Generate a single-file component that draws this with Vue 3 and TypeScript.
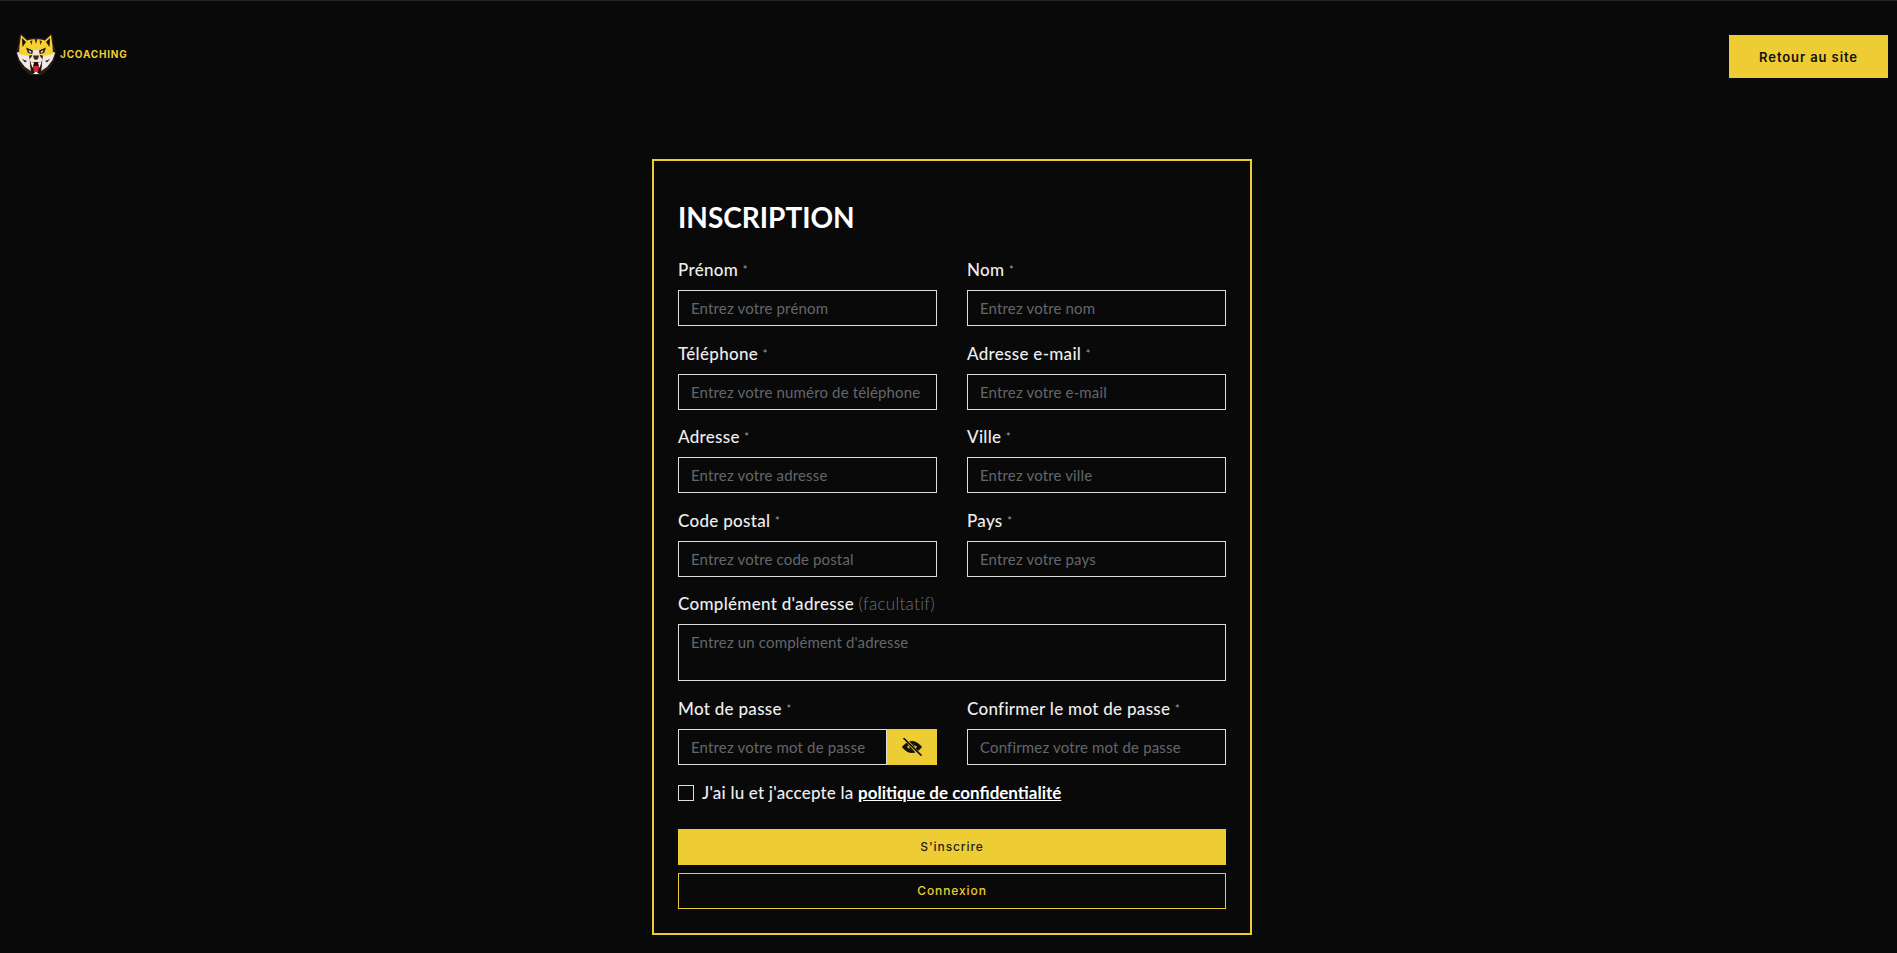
<script setup lang="ts">
const rows = [
  [
    { label: 'Prénom', placeholder: 'Entrez votre prénom' },
    { label: 'Nom', placeholder: 'Entrez votre nom' },
  ],
  [
    { label: 'Téléphone', placeholder: 'Entrez votre numéro de téléphone' },
    { label: 'Adresse e-mail', placeholder: 'Entrez votre e-mail' },
  ],
  [
    { label: 'Adresse', placeholder: 'Entrez votre adresse' },
    { label: 'Ville', placeholder: 'Entrez votre ville' },
  ],
  [
    { label: 'Code postal', placeholder: 'Entrez votre code postal' },
    { label: 'Pays', placeholder: 'Entrez votre pays' },
  ],
]
</script>

<template>
  <div class="page">
    <header class="topbar">
      <a class="brand" href="#">
        <svg class="tiger" viewBox="0 0 40 42" width="40" height="42">
          <!-- outline -->
          <path d="M4 0 L11 6 Q20 3 29 6 L36 0 L38 12 L40 20 L38 28 L33 36 L26 42 L14 42 L7 36 L2 28 L0 20 L2 12 Z" fill="#2c1c18" />
          <!-- cheeks -->
          <path d="M2 19 L13 22 L15 38 L9 34 L3.5 27 L1 20 Z M38 19 L27 22 L25 38 L31 34 L36.5 27 L39 20 Z" fill="#efeae6" />
          <path d="M6 26 L11 28 L9 29.5 Z M34 26 L29 28 L31 29.5 Z" fill="#3a2a22" />
          <!-- head -->
          <path d="M5 2 L11 7.5 Q20 4.5 29 7.5 L35 2 L36.5 13 L37 21 L28 23 L20 21 L12 23 L3 21 L3.5 13 Z" fill="#f6d130" />
          <!-- ears -->
          <path d="M6 5 L10 9 L6.5 14 Z M34 5 L30 9 L33.5 14 Z" fill="#14100e" />
          <!-- forehead stripes -->
          <path d="M18.5 6 L20 11 L21.5 6 Z M14 8 L15.5 12 L16.5 7.5 Z M26 8 L24.5 12 L23.5 7.5 Z" fill="#3a2a22" />
          <!-- eyes -->
          <path d="M10 14.5 L17 17.5 L17 21 L12 20 Z M30 14.5 L23 17.5 L23 21 L28 20 Z" fill="#1a1311" />
          <path d="M12.5 17 L15.5 18.5 L15 20 L13 19 Z M27.5 17 L24.5 18.5 L25 20 L27 19 Z" fill="#e3ddcf" />
          <!-- nose and muzzle -->
          <path d="M17 17 L23 17 L24 23 L27 27 L25 29 L15 29 L13 27 L16 23 Z" fill="#efe6d4" />
          <path d="M17 22.5 L23 22.5 L22 26 L20 27 L18 26 Z" fill="#3a2a22" />
          <!-- mouth -->
          <path d="M14 29 L26 29 L25 38 L22 41 L18 41 L15 38 Z" fill="#241010" />
          <path d="M17 33 L23 33 L22 39 L18 39 Z" fill="#d8232a" />
          <path d="M14.5 29 L16.5 35 L18 29.5 Z M25.5 29 L23.5 35 L22 29.5 Z M17 41 L20 38.5 L23 41 Z" fill="#fff" />
        </svg>
        <span class="brand-name">JCOACHING</span>
      </a>
      <a class="back-btn" href="#">Retour au site</a>
    </header>

    <main class="main">
      <form class="card" @submit.prevent>
        <h1 class="title">INSCRIPTION</h1>

        <div v-for="(row, i) in rows" :key="i" class="row">
          <div v-for="field in row" :key="field.label" class="field">
            <label class="label">{{ field.label }} <span class="req">*</span></label>
            <input class="input" type="text" :placeholder="field.placeholder" />
          </div>
        </div>

        <div class="field wide">
          <label class="label">Complément d'adresse <span class="optional">(facultatif)</span></label>
          <textarea class="input area" placeholder="Entrez un complément d'adresse"></textarea>
        </div>

        <div class="row">
          <div class="field">
            <label class="label">Mot de passe <span class="req">*</span></label>
            <div class="password">
              <input class="input pass-input" type="password" placeholder="Entrez votre mot de passe" />
              <button class="eye" type="button">
                <svg viewBox="0 0 24 20" width="22" height="18" fill="none" stroke-linecap="round">
                  <path d="M3.5 10 Q12 0.5 20.5 10 Q12 19.5 3.5 10 Z" stroke="#14130c" stroke-width="4" />
                  <circle cx="12" cy="10" r="3" fill="#14130c" />
                  <path d="M5 1.5 L21 19.5" stroke="#eecc33" stroke-width="3.2" />
                  <path d="M3 0.5 L22 19" stroke="#14130c" stroke-width="1.8" />
                </svg>
              </button>
            </div>
          </div>
          <div class="field">
            <label class="label">Confirmer le mot de passe <span class="req">*</span></label>
            <input class="input" type="password" placeholder="Confirmez votre mot de passe" />
          </div>
        </div>

        <label class="consent">
          <input class="check" type="checkbox" />
          <span>J'ai lu et j'accepte la <a class="policy" href="#">politique de confidentialité</a></span>
        </label>

        <button class="btn primary" type="submit">S'inscrire</button>
        <button class="btn outline" type="button">Connexion</button>
      </form>
    </main>
  </div>
</template>

<style>
html,
body {
  margin: 0;
  background: #090909;
}
</style>

<style scoped>
.page {
  min-height: 953px;
  box-sizing: border-box;
  background: #090909;
  border-top: 1px solid #23252c;
  font-family: Lato, "Open Sans", sans-serif;
  color: #eee;
}

.topbar {
  display: flex;
  justify-content: space-between;
  align-items: flex-start;
  box-sizing: border-box;
  height: 78px;
  padding: 32px 9px 0 16px;
}

.brand {
  display: flex;
  align-items: center;
  gap: 4px;
  text-decoration: none;
}

.brand-name {
  font-family: Inter, sans-serif;
  font-size: 10px;
  font-weight: 700;
  letter-spacing: 0.8px;
  color: #eecc33;
}

.back-btn {
  display: flex;
  align-items: center;
  justify-content: center;
  width: 159px;
  height: 43px;
  margin-top: 2px;
  background: #eecc33;
  color: #111;
  font-family: Inter, sans-serif;
  font-size: 13px;
  font-weight: 600;
  letter-spacing: 0.9px;
  text-decoration: none;
}

.main {
  display: flex;
  justify-content: center;
  padding: 80px 0 0 7px;
}

.card {
  box-sizing: border-box;
  width: 600px;
  height: 776px;
  padding: 39px 24px 24px;
  border: 2px solid #f0cd2f;
}

.title {
  margin: 0 0 24px;
  font-size: 28px;
  line-height: 34px;
  font-weight: 700;
  color: #fff;
}

.row {
  display: grid;
  grid-template-columns: 259px 259px;
  gap: 30px;
  margin-bottom: 15.6px;
}

.field {
  display: flex;
  flex-direction: column;
}

.wide {
  margin: 0.6px 0 16px;
}

.label {
  font-size: 17px;
  line-height: 24px;
  font-weight: 500;
  letter-spacing: 0.3px;
  margin-bottom: 8px;
  color: #eee;
}

.req {
  font-size: 11px;
  color: #999;
  vertical-align: 2px;
}

.optional {
  font-weight: 300;
  color: #6f7276;
}

.input {
  box-sizing: border-box;
  width: 100%;
  height: 36px;
  padding: 0 12px;
  background: transparent;
  border: 1px solid #ddd;
  border-radius: 0;
  outline: none;
  color: #eee;
  font-family: Lato, "Open Sans", sans-serif;
  font-size: 15px;
  letter-spacing: 0.15px;
}

.input::placeholder {
  color: #63676c;
  opacity: 1;
}

.area {
  display: block;
  height: 57px;
  padding: 8px 12px;
  resize: none;
}

.password {
  display: flex;
}

.pass-input {
  flex: 1;
  min-width: 0;
}

.eye {
  display: flex;
  align-items: center;
  justify-content: center;
  width: 50px;
  height: 36px;
  padding: 0;
  border: none;
  background: #eecc33;
}

.consent {
  display: flex;
  align-items: center;
  gap: 8px;
  margin: 0 0 24px;
  font-size: 17px;
  line-height: 24px;
  font-weight: 500;
  letter-spacing: 0.2px;
}

.check {
  appearance: none;
  box-sizing: border-box;
  width: 16px;
  height: 16px;
  margin: 0;
  background: transparent;
  border: 1px solid #ddd;
}

.policy {
  color: #fff;
  font-weight: 700;
  letter-spacing: 0;
  text-decoration: underline;
}

.btn {
  display: block;
  box-sizing: border-box;
  width: 100%;
  height: 36px;
  border-radius: 0;
  font-family: Inter, sans-serif;
  font-size: 12px;
  font-weight: 500;
  letter-spacing: 0.9px;
}

.primary {
  border: none;
  background: #eecc33;
  color: #222;
  margin-bottom: 8px;
}

.outline {
  background: transparent;
  border: 1px solid #eecc33;
  color: #eecc33;
}
</style>
